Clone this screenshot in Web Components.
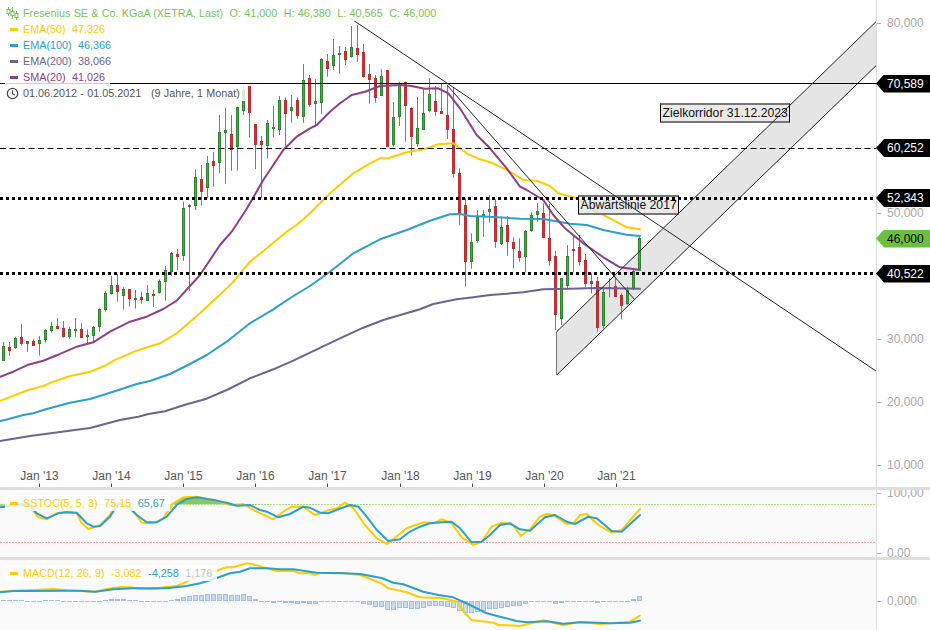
<!DOCTYPE html>
<html lang="de">
<head>
<meta charset="utf-8">
<title>Fresenius SE & Co. KGaA</title>
<style>
  html, body { margin: 0; padding: 0; background: #fff; font-family: "Liberation Sans", Arial, sans-serif; }
</style>
</head>
<body>
<chart-app></chart-app>
<script>
// helpers: the readings were taken from 3x crops, so they get mapped back here
const escala = (pts, ox, oy) => pts.map(([x, y]) => [ox + x / 3, oy + y / 3]);
const aPath = (pts) => pts.map(p => p[0].toFixed(1) + "," + p[1].toFixed(1)).join(" ");
const linea = (pts, color, w) => `<polyline points="${aPath(pts)}" fill="none" stroke="${color}" stroke-width="${w}" stroke-linejoin="round" stroke-linecap="round"/>`;
const candleX = (i) => Math.floor(3.3 + 6.006 * i) + 0.5;

const AMARILLO = "#ffcc00", AZUL = "#2ba0c9", GRIS = "#6d6290", MORADO = "#8e3f86";

// [wick top, body top, body bottom, wick bottom, up?]  in absolute page y
const z4 = (a, b, c, d, g) => [210 + a / 3, 210 + b / 3, 210 + c / 3, 210 + d / 3, g];
const z1 = (a, b, c, d, g) => [a / 3, b / 3, c / 3, d / 3, g];
const z5 = (a, b, c, d, g) => [180 + a / 3, 180 + b / 3, 180 + c / 3, 180 + d / 3, g];

const VELAS = [
  z4(396,408,452,452,1), z4(396,412,422,437,0), z4(380,385,413,416,1), z4(342,382,402,407,0),
  z4(393,394,401,425,1), z4(388,394,407,408,0), z4(378,391,401,437,1), z4(358,361,389,398,1),
  z4(336,349,362,368,1), z4(324,349,356,358,0), z4(333,355,380,383,0), z4(352,358,380,386,1),
  z4(324,357,359,380,1), z4(340,358,383,384,0), z4(358,376,380,402,1), z4(348,352,377,395,1),
  z4(295,298,352,365,1), z4(243,250,299,305,1), z4(198,226,251,254,1), z4(192,226,245,275,0),
  z4(232,238,257,299,1), z4(238,238,266,290,0), z4(240,265,266,296,1), z4(246,262,269,281,0),
  z4(225,250,272,273,1), z4(240,253,254,291,0), z4(208,214,250,251,1), z4(168,179,215,272,1),
  z4(126,130,185,197,1), z4(117,133,140,180,0),
  z1(605,625,767,783,1), z1(613,615,620,873,1), z1(508,531,617,630,1), z1(495,537,575,617,0),
  z1(468,490,563,595,1), z1(455,484,497,560,0), z1(345,397,489,520,1), z1(323,391,398,551,1),
  z1(345,403,449,512,0), z1(320,322,440,512,1), z1(256,270,332,345,1), z1(258,258,338,413,0),
  z1(373,373,434,507,0), z1(408,424,434,595,0), z1(360,370,437,476,1), z1(318,382,386,413,1),
  z1(288,301,391,405,1), z1(292,301,341,445,0), z1(285,322,332,368,1), z1(292,301,347,356,0),
  z1(192,241,350,368,1), z1(225,235,316,320,0),
  z1(238,304,311,375,1), z1(175,178,310,341,1), z1(162,184,206,230,0), z1(117,166,199,210,1),
  z1(138,159,161,221,1), z1(140,154,179,195,0), z1(78,142,172,173,1), z1(75,145,164,185,0),
  z1(132,157,232,233,0), z1(192,223,239,311,0), z1(225,235,293,308,0), z1(208,229,287,287,1),
  z1(211,211,440,440,0), z1(306,352,434,440,1), z1(245,255,352,378,1), z1(245,247,317,425,0),
  z1(322,324,410,467,0), z1(291,385,431,440,1), z1(265,340,389,389,1), z1(234,283,332,337,1),
  z1(258,304,335,347,0), z1(250,334,341,341,0), z1(258,345,389,417,0), z1(262,388,521,533,0),
  z1(505,520,638,674,0),
  z5(55,76,245,320,0), z5(160,187,245,266,1), z5(90,112,182,188,1), z5(90,103,105,170,1),
  z5(45,88,95,128,1), z5(58,79,187,203,0), z5(110,142,191,195,1), z5(108,136,185,227,0),
  z5(172,187,208,265,0), z5(175,214,233,245,0), z5(150,154,230,277,1), z5(97,106,152,155,1),
  z5(70,94,104,125,1), z5(70,100,173,175,0), z5(72,175,242,257,0), z5(213,229,404,450,0),
  z5(295,295,418,435,1), z5(195,229,317,325,1), z5(165,208,212,277,0), z5(165,202,245,257,0),
  z5(222,241,311,322,0), z5(280,304,311,340,0), z5(290,304,443,455,0), z5(320,337,437,445,1),
  z5(295,322,324,352,1), z5(290,319,350,350,0), z5(340,346,377,418,0), z5(320,329,371,375,1),
  z5(268,272,325,330,1), z5(165,175,268,270,1)
];

const SMA20 = [
  ...escala([[0,500],[40,485],[85,464],[130,452],[170,436],[230,410],[280,397],[330,365],[390,335],[440,320],[490,297],[530,272],[600,195],[660,105],[695,65],[738,0]], 0, 210),
  ...escala([[790,540],[850,450],[890,410],[930,385]], 0, 0),
  ...escala([[20,375],[60,335],[90,310],[125,285],[165,275],[210,258],[270,255],[300,257],[345,266],[385,265],[415,280],[450,325],[500,405],[540,445],[590,505],[630,560]], 310, 0),
  ...escala([[650,30],[700,60],[730,105],[765,145],[820,190],[880,232],[930,262],[990,270]], 310, 180)
];
const EMA50 = [
  ...escala([[0,572],[60,550],[85,540],[130,528],[160,515],[210,498],[270,485],[320,465],[340,452],[410,422],[480,400],[530,370],[600,310],[680,235],[700,215],[750,155],[800,115],[860,65],[890,45],[930,10]], 0, 210),
  ...escala([[60,580],[130,520],[180,490],[210,475],[235,475],[290,457],[345,447],[385,433],[430,430],[470,460],[510,478],[550,490],[600,515],[640,540],[680,542],[720,558],[745,580],[800,595]], 310, 0),
  ...escala([[840,85],[900,115],[950,142],[990,148]], 310, 180)
];
const EMA100 = [
  ...escala([[0,633],[15,630],[70,615],[100,610],[140,597],[210,578],[270,567],[340,545],[410,522],[450,513],[510,492],[570,462],[620,435],[680,395],[750,340],[820,298],[880,258],[930,228]], 0, 210),
  ...escala([[60,275],[130,220],[210,178],[290,150],[360,122],[420,103],[450,102],[480,108],[540,110],[630,116],[700,117],[780,131],[830,135],[880,150],[950,164],[990,168]], 310, 180)
];
const EMA200 = [
  [0,441],[30,436],[60,432],[90,428],[120,420],
  ...escala([[415,620],[445,612],[495,604],[560,583],[620,566],[680,540],[750,505],[820,478],[880,452],[930,428]], 0, 210),
  ...escala([[90,475],[160,443],[220,420],[330,388],[370,372],[440,358],[490,352],[540,345],[640,337],[700,328],[780,326],[860,324],[990,326]], 310, 180)
];

const STOCH_AZUL = [
  ...escala([[0,142],[60,135],[85,133],[110,160],[140,175],[175,160],[200,157],[230,158],[260,190],[280,200],[300,198],[330,170],[355,130],[385,140],[410,165],[440,187],[470,187],[500,170],[530,135],[560,117],[590,112],[640,120],[680,128],[710,137],[750,135],[780,150],[800,155],[835,172],[870,162],[910,140]], 0, 460),
  ...escala([[0,143],[30,158],[55,160],[85,148],[120,135],[145,140],[170,170],[200,210],[235,243],[270,238],[295,218],[330,200],[360,190],[395,187],[425,185],[450,205],[485,247],[515,245],[540,225],[570,195],[600,190],[630,208],[660,212],[705,172],[735,165],[770,185],[795,192],[835,170],[860,175],[905,213],[935,215],[990,165]], 310, 460)
];
const STOCH_AMARILLO = [
  ...escala([[0,140],[60,130],[90,140],[115,172],[140,178],[170,160],[200,155],[230,160],[245,190],[265,207],[300,195],[330,165],[345,135],[370,125],[395,145],[425,188],[460,190],[490,175],[520,130],[550,112],[590,110],[640,120],[690,135],[730,132],[770,155],[820,178],[850,155],[875,140],[910,140]], 0, 460),
  ...escala([[0,155],[15,165],[50,152],[80,145],[105,128],[130,145],[165,195],[200,235],[232,252],[290,205],[340,187],[370,190],[395,178],[425,190],[455,232],[490,255],[515,245],[545,200],[575,188],[610,195],[632,228],[660,208],[690,170],[710,162],[730,165],[770,192],[790,190],[810,165],[830,162],[865,195],[905,218],[935,210],[965,175],[990,147]], 310, 460)
];
const MACD_AMARILLO = [
  ...escala([[0,395],[40,392],[100,390],[160,387],[200,391],[240,393],[285,396],[320,387],[360,381],[390,382],[420,386],[460,388],[500,380],[530,378],[560,365],[600,345],[640,335],[680,322],[700,322],[740,310],[760,313],[800,325],[830,333],[880,333],[900,340]], 0, 460),
  ...escala([[0,340],[15,344],[30,339],[100,339],[150,345],[210,368],[235,385],[290,397],[330,412],[400,415],[440,425],[465,460],[485,480],[550,488],[565,494],[630,498],[700,481],[760,496],[810,485],[870,492],[960,485],[990,467]], 310, 460)
];
const MACD_AZUL = [
  ...escala([[0,397],[40,393],[100,393],[200,392],[240,392],[285,395],[340,388],[400,385],[500,385],[560,378],[600,370],[640,358],[690,340],[720,335],[750,325],[800,325],[840,328],[880,328]], 0, 460),
  ...escala([[0,335],[20,338],[100,340],[150,342],[215,354],[250,368],[280,373],[340,395],[385,405],[430,412],[480,435],[530,460],[570,470],[620,483],[650,487],[710,484],[760,491],[810,487],[860,488],[900,490],[960,488],[990,482]], 310, 460)
];
const HISTO = [1,1,1,1,.5,.5,.5,1,1,1,.5,.3,.3,-1,-1,-1,.3,1,2,2,2,1,1,.3,.3,.3,.3,.3,1,
  2,4,5,6,6,7,7,7,7,6,6,7,5,2,.3,-.5,-1.5,-.5,-1.5,-1.5,-3,-2,-3,
  -3,-1,-.5,-.3,-.3,-.3,-.5,-.5,-3,-4,-6,-6,-9,-9,-7,-7,-8,-8,-7,-5,-5,-5,-6,-7,-10,-12,-12,-11,-10,-8,-8,-7,-6,-5,-5,-3,-.5,
  .5,.5,-.3,-3,-2,-1,-.5,.5,-.3,-.3,-2,-1,-.5,-.3,-.3,-.3,2,5];

class LegendRow extends HTMLElement {
  connectedCallback() {
    const color = this.getAttribute("color") || "#555";
    const icono = this.getAttribute("icon");
    let marca = `<i></i>`;
    if (icono === "velas") {
      marca = `<svg width="13" height="13" viewBox="0 0 13 13" fill="#fff" stroke="${color}" stroke-width="1">
        <path d="M2.5 0v9M6.5 0v12M10.500 4v9" fill="none"/>
        <rect x="1" y="2.500" width="3" height="4"/>
        <rect x="5" y="4.500" width="3" height="4"/>
        <rect x="9" y="6.500" width="3" height="4"/></svg>`;
    }
    if (icono === "reloj") {
      marca = `<svg width="13" height="13" viewBox="0 0 13 13" fill="none" stroke="#444" stroke-width="1.2">
        <circle cx="6.5" cy="6.5" r="5.2"/><path d="M6.5 3.200v3.500l2.400 1.400"/></svg>`;
    }
    this.attachShadow({ mode: "open" }).innerHTML = `
      <style>
        :host {
          display: flex;
          width: max-content;
          height: 16px;
          align-items: center;
          background: rgba(255, 255, 255, 0.8);
          color: ${color};
          font: 10.8px/16px "Liberation Sans", Arial, sans-serif;
          word-spacing: 0.25px;
          white-space: pre;
        }
        .marca { width: 18px; display: flex; justify-content: center; align-items: center; box-sizing: border-box; padding-right: 1px; }
        i { display: block; width: 8px; height: 3px; background: ${color}; }
        .texto { padding-right: 5px; }
        svg { display: block; margin-left: -3px; }
      </style>
      <span class="marca">${marca}</span><span class="texto"><slot></slot></span>
    `;
  }
}

class ChartLegend extends HTMLElement {
  connectedCallback() {
    this.attachShadow({ mode: "open" }).innerHTML = `
      <style>
        :host { position: absolute; left: 5px; top: ${this.getAttribute("top") || 5}px; display: flex; flex-direction: column; }
      </style>
      <slot></slot>
    `;
  }
}

class AxisTick extends HTMLElement {
  connectedCallback() {
    this.attachShadow({ mode: "open" }).innerHTML = `
      <style>
        :host { position: absolute; left: 0; right: 0; top: ${this.getAttribute("y") - 8}px; height: 16px; display: flex; align-items: center; font: 12px/16px "Liberation Sans", Arial, sans-serif; color: #a8a8a8; }
        i { display: block; width: 4px; height: 1px; background: #aaa; margin-right: 6px; }
      </style>
      <i></i><slot></slot>
    `;
  }
}

class PriceFlag extends HTMLElement {
  connectedCallback() {
    const verde = this.hasAttribute("green");
    this.attachShadow({ mode: "open" }).innerHTML = `
      <style>
        :host {
          position: absolute;
          left: -1px;
          right: 0;
          top: ${this.getAttribute("y") - 9}px;
          height: 18px;
          box-sizing: border-box;
          padding-left: 11px;
          background: ${verde ? "#6cc03f" : "#000"};
          color: ${verde ? "#000" : "#fff"};
          font: 12px/18px "Liberation Sans", Arial, sans-serif;
          clip-path: polygon(0 50%, 8px 0, 100% 0, 100% 100%, 8px 100%);
        }
      </style>
      <slot></slot>
    `;
  }
}

class NoteLabel extends HTMLElement {
  connectedCallback() {
    this.attachShadow({ mode: "open" }).innerHTML = `
      <style>
        :host {
          position: absolute;
          left: ${this.getAttribute("x")}px;
          top: ${this.getAttribute("y")}px;
          width: ${this.getAttribute("w")}px;
          height: 20px;
          box-sizing: border-box;
          padding-left: 2px;
          border-left: 1px solid #000;
          border-right: 1px solid #000;
          border-top: 2px solid #777;
          border-bottom: 2px solid #777;
          background: rgba(228, 228, 228, 0.8);
          color: #111;
          font: 12.2px/17px "Liberation Sans", Arial, sans-serif;
          white-space: nowrap;
        }
      </style>
      <slot></slot>
    `;
  }
}

class PricePane extends HTMLElement {
  dibujarVelas() {
    return VELAS.map((v, i) => {
      const x = candleX(i);
      const [arriba, top, bottom, abajo, sube] = v;
      const fill = sube ? "#4aad2e" : "#ea2424";
      const borde = sube ? "#2f852f" : "#b93030";
      const y0 = Math.round(top) + 0.5, y1 = Math.max(Math.round(bottom) - 0.5, y0 + 1);
      return `<line x1="${x}" x2="${x}" y1="${arriba.toFixed(1)}" y2="${abajo.toFixed(1)}" stroke="#7a7a7a"/>
        <rect x="${x - 1}" y="${y0}" width="2" height="${y1 - y0}" fill="${fill}" stroke="${borde}"/>`;
    }).join("");
  }

  connectedCallback() {
    const enero = [[39.5, "Jan '13"], [111.5, "Jan '14"], [183.5, "Jan '15"], [255.5, "Jan '16"], [327.5, "Jan '17"], [400.5, "Jan '18"], [472.5, "Jan '19"], [544.5, "Jan '20"], [616.5, "Jan '21"]];
    this.attachShadow({ mode: "open" }).innerHTML = `
      <style>
        :host { display: grid; grid-template-columns: 876px 54px; height: 487px; overflow: hidden; background: #fff; }
        .plot { position: relative; }
        svg { position: absolute; left: 0; top: 0; display: block; }
        .mes { position: absolute; top: 468px; width: 60px; margin-left: -30px; text-align: center; font: 12px/16px "Liberation Sans", Arial, sans-serif; color: #555; }
        .eje { position: relative; border-left: 1px solid #ddd; }
      </style>
      <div class="plot">
        <svg width="876" height="487" viewBox="0 0 876 487">
          <polygon points="556.7,331.7 876,21.7 876,65.7 556.7,375" fill="#e5e5e5"/>
          <line x1="556.5" y1="331.7" x2="556.5" y2="375" stroke="#777"/>
          ${this.dibujarVelas()}
          ${linea(EMA200, GRIS, 2)}
          ${linea(EMA100, AZUL, 2)}
          ${linea(EMA50, AMARILLO, 2)}
          ${linea(SMA20, MORADO, 2)}
        </svg>
        <note-label x="659.5" y="102.5" w="130.5">Zielkorridor 31.12.2023</note-label>
        <note-label x="577.5" y="194.5" w="101.5">Abwärtslinie 2017</note-label>
        <svg width="876" height="487" viewBox="0 0 876 487">
          <line x1="0" x2="876" y1="83.5" y2="83.5" stroke="#000"/>
          <line x1="0" x2="876" y1="148.5" y2="148.5" stroke="#000" stroke-dasharray="6 3.5"/>
          <line x1="0" x2="876" y1="198.5" y2="198.5" stroke="#000" stroke-width="3" stroke-dasharray="3 3"/>
          <line x1="0" x2="876" y1="273.500" y2="273.500" stroke="#000" stroke-width="3" stroke-dasharray="3 3"/>
          <line x1="556.7" y1="331.7" x2="876" y2="21.7" stroke="#222"/>
          <line x1="556.7" y1="375" x2="876" y2="65.7" stroke="#222"/>
          <line x1="350" y1="18" x2="876" y2="371" stroke="#222"/>
          <line x1="447" y1="85" x2="635" y2="300" stroke="#222"/>
          ${enero.map(([x]) => `<line x1="${x}" x2="${x}" y1="483.5" y2="487" stroke="#555"/>`).join("")}
        </svg>
        ${enero.map(([x, t]) => `<span class="mes" style="left:${x}px">${t}</span>`).join("")}
        <chart-legend top="5">
          <legend-row color="#74c552" icon="velas">Fresenius SE &amp; Co. KGaA (XETRA, Last)  O: 41,000  H: 46,380  L: 40,565  C: 46,000</legend-row>
          <legend-row color="#ffcc00">EMA(50)  47,326</legend-row>
          <legend-row color="#2ba0c9">EMA(100)  46,366</legend-row>
          <legend-row color="#6d6290">EMA(200)  38,066</legend-row>
          <legend-row color="#8e3f86">SMA(20)  41,026</legend-row>
          <legend-row color="#555555" icon="reloj">01.06.2012 - 01.05.2021   (9 Jahre, 1 Monat)</legend-row>
        </chart-legend>
      </div>
      <div class="eje">
        <axis-tick y="23">80,000</axis-tick>
        <axis-tick y="213">50,000</axis-tick>
        <axis-tick y="339">30,000</axis-tick>
        <axis-tick y="402">20,000</axis-tick>
        <axis-tick y="465">10,000</axis-tick>
        <price-flag y="83.500">70,589</price-flag>
        <price-flag y="148">60,252</price-flag>
        <price-flag y="198">52,343</price-flag>
        <price-flag y="238.500" green>46,000</price-flag>
        <price-flag y="273.500">40,522</price-flag>
      </div>
    `;
  }
}

class IndicatorPane extends HTMLElement {
  contenido() {
    if (this.getAttribute("kind") === "stoch") {
      return `<polygon points="170,504.3 177,501.5 183,497.5 197,496.5 213,500 227,504.3" fill="#8cc763"/>
        <polygon points="0,504.3 5,504.3 5,508 0,508" fill="#8cc763"/>
        <line x1="0" x2="875" y1="504.5" y2="504.5" stroke="#a9df7e" stroke-dasharray="2 1"/>
        <line x1="0" x2="875" y1="542.5" y2="542.5" stroke="#ff9f9f" stroke-dasharray="2 1"/>
        ${linea(STOCH_AMARILLO, AMARILLO, 2)}
        ${linea(STOCH_AZUL, AZUL, 2)}`;
    }
    const barras = HISTO.map((h, i) => {
      const x = candleX(i);
      const y = Math.round(h > 0 ? 601 - h : 601) + 0.5;
      const alto = Math.max(Math.round(Math.abs(h)), 1) - 1;
      return alto > 0
        ? `<rect x="${x - 2}" y="${y}" width="4" height="${alto}" fill="#c8dbf2" stroke="#a2bfdf"/>`
        : `<line x1="${x - 2.5}" x2="${x + 2.5}" y1="${y}" y2="${y}" stroke="#a2bfdf"/>`;
    }).join("");
    return `${barras}
      ${linea(MACD_AMARILLO, AMARILLO, 2)}
      ${linea(MACD_AZUL, AZUL, 2)}`;
  }

  connectedCallback() {
    const stoch = this.getAttribute("kind") === "stoch";
    const top = stoch ? 490 : 560;
    const alto = stoch ? 67 : 70;
    this.attachShadow({ mode: "open" }).innerHTML = `
      <style>
        :host { display: grid; grid-template-columns: 876px 54px; height: ${alto}px; overflow: hidden; background: #fff; }
        .plot { position: relative; background: #fafafa; }
        svg { display: block; }
        .eje { position: relative; border-left: 1px solid #ddd; }
      </style>
      <div class="plot">
        <svg width="876" height="${alto}" viewBox="0 ${top} 876 ${alto}">${this.contenido()}</svg>
        <chart-legend top="5">
          ${stoch
            ? `<legend-row color="#ffcc00">SSTOC(5, 5, 3)  75,15  <span style="color:#2ba0c9">65,67</span></legend-row>`
            : `<legend-row color="#ffcc00">MACD(12, 26, 9)  -3,082  <span style="color:#2ba0c9">-4,258</span>  <span style="color:#b4c8e0">1,176</span></legend-row>`}
        </chart-legend>
      </div>
      <div class="eje">
        ${stoch
          ? `<axis-tick y="3">100,00</axis-tick><axis-tick y="63">0,00</axis-tick>`
          : `<axis-tick y="41">0,000</axis-tick>`}
      </div>
    `;
  }
}

class PaneDivider extends HTMLElement {
  connectedCallback() {
    this.attachShadow({ mode: "open" }).innerHTML = `
      <style>:host { display: block; height: 3px; background: #dedede; }</style>
    `;
  }
}

class ChartApp extends HTMLElement {
  connectedCallback() {
    this.attachShadow({ mode: "open" }).innerHTML = `
      <style>
        :host { display: flex; flex-direction: column; width: 930px; height: 630px; overflow: hidden; background: #fff; }
      </style>
      <price-pane></price-pane>
      <pane-divider></pane-divider>
      <indicator-pane kind="stoch"></indicator-pane>
      <pane-divider></pane-divider>
      <indicator-pane kind="macd"></indicator-pane>
    `;
  }
}

customElements.define("legend-row", LegendRow);
customElements.define("chart-legend", ChartLegend);
customElements.define("axis-tick", AxisTick);
customElements.define("price-flag", PriceFlag);
customElements.define("note-label", NoteLabel);
customElements.define("price-pane", PricePane);
customElements.define("indicator-pane", IndicatorPane);
customElements.define("pane-divider", PaneDivider);
customElements.define("chart-app", ChartApp);
</script>
</body>
</html>
